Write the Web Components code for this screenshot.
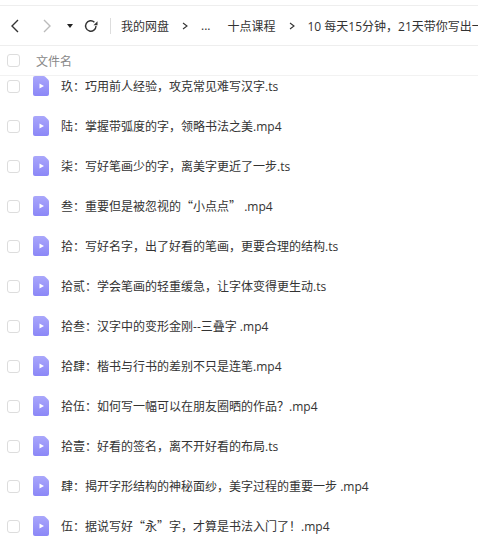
<!DOCTYPE html>
<html lang="zh">
<head>
<meta charset="utf-8">
<title>我的网盘</title>
<style>
    html, body {
        margin: 0;
        height: 100%;
        overflow: hidden;
        background: #fff;
        color: #333;
        font-family: "Open Sans", "Noto Sans CJK SC", sans-serif;
        font-size: 12px;
    }
    .q { font-family: "Noto Sans CJK SC", sans-serif; }
    .c { font-family: "Noto Sans CJK TC", sans-serif; }
</style>
</head>
<body>
<disk-toolbar>
    <bread-crumb>我的网盘</bread-crumb>
    <bread-crumb plain>...</bread-crumb>
    <bread-crumb>十点课程</bread-crumb>
    <bread-crumb plain>10 每天15分钟，21天带你写出一手好字</bread-crumb>
</disk-toolbar>
<list-header>文件名</list-header>
<file-list>
    <file-row>玖<span class="c">：</span>巧用前人经验，攻克常见难写汉字.ts</file-row>
    <file-row>陆<span class="c">：</span>掌握带弧度的字，领略书法之美.mp4</file-row>
    <file-row>柒<span class="c">：</span>写好笔画少的字，离美字更近了一步.ts</file-row>
    <file-row>叁<span class="c">：</span>重要但是被忽视的<span class="q">“小点点”</span> .mp4</file-row>
    <file-row>拾<span class="c">：</span>写好名字，出了好看的笔画，更要合理的结构.ts</file-row>
    <file-row>拾贰<span class="c">：</span>学会笔画的轻重缓急，让字体变得更生动.ts</file-row>
    <file-row>拾叁<span class="c">：</span>汉字中的变形金刚--三叠字 .mp4</file-row>
    <file-row>拾肆<span class="c">：</span>楷书与行书的差别不只是连笔.mp4</file-row>
    <file-row>拾伍<span class="c">：</span>如何写一幅可以在朋友圈晒的作品？.mp4</file-row>
    <file-row>拾壹<span class="c">：</span>好看的签名，离不开好看的布局.ts</file-row>
    <file-row>肆<span class="c">：</span>揭开字形结构的神秘面纱，美字过程的重要一步 .mp4</file-row>
    <file-row>伍<span class="c">：</span>据说写好<span class="q">“永”</span>字，才算是书法入门了！.mp4</file-row>
</file-list>

<script>
class DiskToolbar extends HTMLElement {
    constructor() {
        super();
        this.attachShadow({ mode: 'open' });
        this.shadowRoot.innerHTML = `
            <style>
                :host {
                    display: flex;
                    align-items: center;
                    height: 39px;
                    margin-top: 5px;
                    border-top: 1px solid #eee;
                    border-bottom: 1px solid #eee;
                    white-space: nowrap;
                    overflow: hidden;
                }
                svg { display: block; flex: none; fill: none; }
                .back { margin-left: 10px; }
                .forward { margin-left: 22px; }
                .drop { margin-left: 15px; }
                .refresh { margin-left: 11px; }
                .sep { flex: none; width: 1px; height: 16px; background: #ddd; margin: 0 10px 0 12px; }
            </style>
            <svg class="back" width="10" height="14" viewBox="0 0 10 14"><path d="M8 1 2 7l6 6" stroke="#333" stroke-width="1.4"/></svg>
            <svg class="forward" width="10" height="14" viewBox="0 0 10 14"><path d="M2 1l6 6-6 6" stroke="#bbb" stroke-width="1.4"/></svg>
            <svg class="drop" width="6" height="4" viewBox="0 0 6 4"><path d="M0 0h6L3 4z" fill="#222"/></svg>
            <svg class="refresh" width="14" height="14" viewBox="0 0 14 14"><path d="M12 7a5.2 5.2 0 1 1-1.6-3.8" stroke="#333" stroke-width="1.4"/><path d="M13.5 2.2v4h-4z" fill="#333"/></svg>
            <span class="sep"></span>
            <slot></slot>
        `;
    }
}

class BreadCrumb extends HTMLElement {
    constructor() {
        super();
        this.attachShadow({ mode: 'open' });
        const arrow = this.hasAttribute('plain') ? '' : `
            <svg width="6" height="8" viewBox="0 0 6 8"><path d="M1 1l4 3-4 3" fill="none" stroke="#333" stroke-width="1.1"/></svg>`;
        this.shadowRoot.innerHTML = `
            <style>
                :host { display: inline-flex; align-items: center; flex: none; color: #333; }
                :host([plain]) { margin-right: 17px; }
                svg { display: block; margin: 0 13px; }
            </style>
            <slot></slot>${arrow}
        `;
    }
}

class ListHeader extends HTMLElement {
    constructor() {
        super();
        this.attachShadow({ mode: 'open' });
        this.shadowRoot.innerHTML = `
            <style>
                :host {
                    display: flex;
                    align-items: center;
                    height: 29px;
                    border-bottom: 1px solid #f2f2f2;
                    color: #888;
                }
                .check {
                    flex: none;
                    width: 11px; height: 11px; margin: 0 16px 0 7px;
                    border: 1px solid #ddd; border-radius: 3px;
                }
            </style>
            <div class="check"></div>
            <slot></slot>
        `;
    }
}

class FileList extends HTMLElement {
    constructor() {
        super();
        this.attachShadow({ mode: 'open' });
        this.shadowRoot.innerHTML = `
            <style>
                :host { display: block; height: 467px; overflow: hidden; }
                div { margin-top: -10px; }
            </style>
            <div><slot></slot></div>
        `;
    }
}

class FileRow extends HTMLElement {
    constructor() {
        super();
        this.attachShadow({ mode: 'open' });
        this.shadowRoot.innerHTML = `
            <style>
                :host {
                    display: flex;
                    align-items: center;
                    height: 40px;
                    white-space: pre;
                    color: #333;
                }
                .check {
                    flex: none;
                    width: 11px; height: 11px; margin-left: 7px;
                    border: 1px solid #ddd; border-radius: 3px;
                }
                svg { display: block; flex: none; margin: 0 12px 0 13px; }
            </style>
            <div class="check"></div>
            <svg width="16" height="20" viewBox="0 0 16 20">
                <defs>
                    <linearGradient id="g" x1="0" y1="0" x2="0" y2="1">
                        <stop offset="0" stop-color="#a9a6fb"/>
                        <stop offset="1" stop-color="#8b87f7"/>
                    </linearGradient>
                </defs>
                <path d="M2 0h8.5q1 0 2 1L15 3.5q1 1 1 2V18a2 2 0 0 1-2 2H2a2 2 0 0 1-2-2V2a2 2 0 0 1 2-2z" fill="url(#g)"/>
                <path d="M6.5 7.5 11 10l-4.500 2.500z" fill="#fff"/>
            </svg>
            <div><slot></slot></div>
        `;
    }
}

customElements.define('disk-toolbar', DiskToolbar);
customElements.define('bread-crumb', BreadCrumb);
customElements.define('list-header', ListHeader);
customElements.define('file-list', FileList);
customElements.define('file-row', FileRow);
</script>
</body>
</html>
